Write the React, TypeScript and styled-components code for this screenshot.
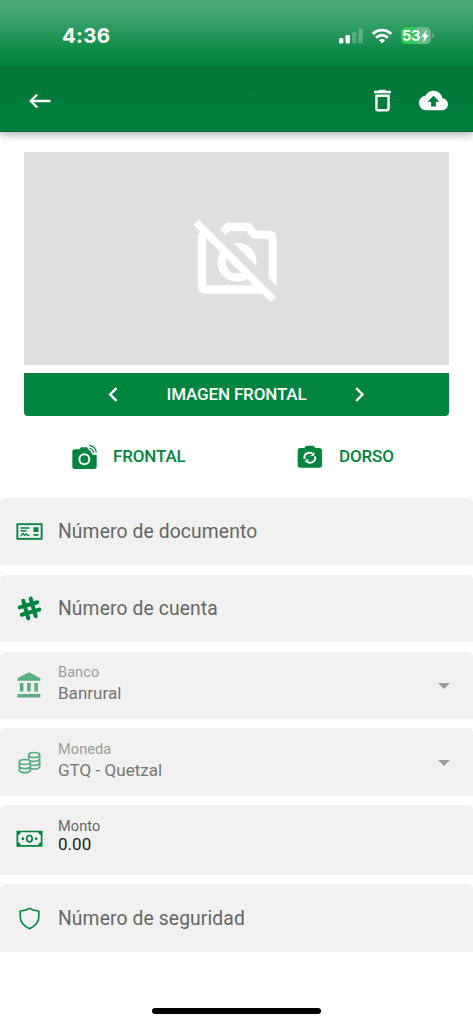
import React from 'react';
import styled, { createGlobalStyle } from 'styled-components';

const GREEN = '#00853f';

const GlobalStyle = createGlobalStyle`
  * { box-sizing: border-box; }
  body { margin: 0; background: #fff; font-family: Roboto, sans-serif; }
  svg { display: block; flex: none; }
`;

const Screen = styled.div`
  display: flex;
  flex-direction: column;
  width: 473px;
  height: 1024px;
  background: #fff;
  overflow: hidden;
`;

const Header = styled.header`
  flex: none;
  height: 132px;
  box-shadow: 0 2px 9px rgba(0, 0, 0, 0.36);
  border-bottom: 1px solid #04622f;
`;

const StatusBar = styled.div`
  display: flex;
  align-items: center;
  height: 66px;
  padding: 5px 39.5px 0 62px;
  background: linear-gradient(#4fab7a 0%, #45a672 18%, #0a8a46 78%, #00843f 100%);
  color: #fff;
`;

const Clock = styled.span`
  flex: 1;
  font: 700 20.5px/24px Inter, sans-serif;
  letter-spacing: 0.25px;
`;

const StatusIcons = styled.div`
  display: flex;
  align-items: center;
  gap: 9px;
`;

const Battery = styled.div`
  display: flex;
  align-items: center;
  justify-content: center;
  gap: 1px;
  width: 30px;
  height: 17px;
  border-radius: 5px;
  background: linear-gradient(90deg, #33c659 0 53%, #6db989 53%);
  font: 700 14.5px/17px Inter, sans-serif;
  letter-spacing: -0.3px;
`;

const BatteryWrap = styled.div`
  display: flex;
  align-items: center;
  gap: 1px;
`;

const BatteryCap = styled.i`
  width: 2px;
  height: 5px;
  border-radius: 0 2px 2px 0;
  background: #63b485;
`;

const AppBar = styled.div`
  display: flex;
  align-items: center;
  height: 65px;
  padding: 4px 25px 0 29px;
  background: linear-gradient(#007536, #00803c);
  color: #fff;
`;

const AppActions = styled.div`
  display: flex;
  gap: 22px;
  margin-left: auto;
`;

const Preview = styled.div`
  display: flex;
  flex: none;
  align-items: center;
  justify-content: center;
  height: 213px;
  margin: 20px 24px 0;
  padding: 4px 4px 0 0;
  background: #dfdfdf;
`;

const Switcher = styled.div`
  display: flex;
  flex: none;
  align-items: center;
  justify-content: space-between;
  height: 43px;
  margin: 8px 24px 0;
  padding: 0 84px;
  border-radius: 0 0 4px 4px;
  background: ${GREEN};
  color: #fff;
  font-size: 17px;
  font-weight: 500;
  letter-spacing: -0.15px;
`;

const SwitcherTitle = styled.span`
  padding-bottom: 1px;
`;

const Captures = styled.div`
  display: grid;
  flex: none;
  grid-template-columns: 226px 1fr;
  height: 82px;
  padding-left: 71px;
`;

const Capture = styled.div`
  display: flex;
  align-items: center;
  gap: 16px;
  color: ${GREEN};
  font-size: 17px;
  font-weight: 500;
  letter-spacing: -0.15px;
`;

const CaptureLabel = styled.span`
  padding-bottom: 2px;
`;

const Form = styled.div`
  display: flex;
  flex-direction: column;
  flex: none;
  gap: 9.5px;
`;

const Field = styled.div<{ $height?: number }>`
  display: flex;
  align-items: center;
  height: ${(p) => p.$height ?? 67.3}px;
  padding: 0 14.5px;
  border-radius: 5px 5px 0 0;
  background: #f1f1f1;
  color: ${GREEN};
`;

const FieldIcon = styled.div<{ $dim?: boolean; $lift?: number }>`
  padding-bottom: ${(p) => p.$lift ?? 0}px;
  opacity: ${(p) => (p.$dim ? 0.62 : 1)};
`;

const FieldBody = styled.div<{ $lift?: number }>`
  flex: 1;
  margin-left: 14.5px;
  padding-bottom: ${(p) => p.$lift ?? 0}px;
`;

const Placeholder = styled.div`
  padding-top: 1px;
  color: #666;
  font-size: 19.3px;
  line-height: 24px;
  letter-spacing: 0.12px;
`;

const Label = styled.div<{ $dim?: boolean }>`
  color: ${(p) => (p.$dim ? '#9b9b9b' : '#666')};
  font-size: 14.5px;
  line-height: 18px;
  letter-spacing: 0.1px;
`;

const Value = styled.div<{ $dim?: boolean }>`
  margin-top: ${(p) => (p.$dim ? 0 : -3)}px;
  color: ${(p) => (p.$dim ? '#757575' : '#1d1d1d')};
  font-size: 17px;
  line-height: 22px;
  letter-spacing: 0.03px;
`;

const Caret = styled.i`
  width: 0;
  margin: 1px 8.5px 0 0;
  border: 6px solid transparent;
  border-top-color: #9c9c9c;
  border-bottom: 0;
`;

const HomeIndicator = styled.div`
  flex: none;
  width: 169px;
  height: 6px;
  margin: auto auto 10px 152px;
  border-radius: 3px;
  background: #000;
`;

const Signal = () => (
  <svg width="24" height="16" viewBox="0 0 24 16" fill="#fff">
    <rect x="0" y="10" width="4.400" height="5.500" rx="1.300" />
    <rect x="6.500" y="7" width="4.400" height="8.500" rx="1.300" />
    <rect x="13" y="4" width="4.400" height="11.500" rx="1.300" opacity=".25" />
    <rect x="19.300" y="0.500" width="4.400" height="15" rx="1.300" opacity=".25" />
  </svg>
);

const Wifi = () => (
  <svg width="20" height="16" viewBox="0 0 20 16" fill="none" stroke="#fff" strokeWidth="2.800">
    <path d="M.9 5.900a12.900 12.900 0 0 1 18.200 0" />
    <path d="M4.100 9.700a8.300 8.300 0 0 1 11.800 0" />
    <path d="M10 15.500l-3.100-3.300a4.400 4.400 0 0 1 6.200 0z" fill="#fff" stroke="none" />
  </svg>
);

const Bolt = () => (
  <svg width="8" height="12" viewBox="0 0 7 12" fill="#fff">
    <path d="M5 .3L.3 6.800h2.800L2 11.700l4.800-6.600H3.900z" stroke="#fff" strokeWidth=".5" />
  </svg>
);

const BackArrow = () => (
  <svg width="23" height="16" viewBox="0 0 23 16" fill="none" stroke="currentColor" strokeWidth="2.300" strokeLinecap="round" strokeLinejoin="round">
    <path d="M20.700 8H2M7.600 2.200L1.600 8l6 5.800" />
  </svg>
);

const Trash = () => (
  <svg width="29" height="29" viewBox="0 0 24 24" fill="currentColor">
    <path d="M6 19c0 1.100.9 2 2 2h8c1.100 0 2-.9 2-2V7H6v12zM8 9h8v10H8V9zm7.500-5l-1-1h-5l-1 1H5v2h14V4z" />
  </svg>
);

const CloudUpload = () => (
  <svg width="29" height="29" viewBox="0 0 24 24" fill="currentColor">
    <path d="M19.350 10.040C18.670 6.590 15.640 4 12 4 9.110 4 6.600 5.640 5.350 8.040 2.340 8.360 0 10.910 0 14c0 3.310 2.690 6 6 6h13c2.760 0 5-2.240 5-5 0-2.640-2.050-4.780-4.650-4.960zM14 13v4h-4v-4H7l5-5 5 5h-3z" />
  </svg>
);

const NoCamera = () => (
  <svg width="84" height="84" viewBox="37 42 252 252">
    <defs>
      <clipPath id="upper"><path d="M44 0H400V356z" /></clipPath>
      <clipPath id="lower"><path d="M0 5L345 350H0z" /></clipPath>
    </defs>
    <g fill="none" stroke="#fff" strokeWidth="25">
      <circle cx="169" cy="172" r="46" clipPath="url(#upper)" />
      <circle cx="169" cy="172" r="46" clipPath="url(#lower)" />
    </g>
    <g fill="#fff">
      <path d="M118 73L137 53H208L227 77H266Q288 77 288 99V244L264 220V101H216L197 78H148L135 90z" />
      <path d="M51 97Q51 82 64 76L76 98V241H219L244 266H73Q51 266 51 244z" />
      <path d="M38 60L55 44L286 276L270 292z" />
    </g>
  </svg>
);

const Chevron = ({ right }: { right?: boolean }) => (
  <svg width="10" height="15" viewBox="0 0 10 15" fill="none" stroke="currentColor" strokeWidth="2.400">
    <path d={right ? 'M1.200 1.200L7.500 7.500L1.200 13.800' : 'M8.500 1.200L2.200 7.500L8.500 13.800'} />
  </svg>
);

const CameraWireless = () => (
  <svg width="26" height="26" viewBox="-2 -2 78 78">
    <path fill="currentColor" d="M10 14H23L28 8H47Q49 16 55 18Q60 21 62 28H75V66Q75 73 68 73H9Q2 73 2 66V22Q2 14 10 14z" />
    <circle cx="38" cy="44" r="15" fill="none" stroke="#fff" strokeWidth="6" />
    <path d="M48 10Q60 14 63 29H76" fill="none" stroke="#fff" strokeWidth="3" />
    <g fill="none" stroke="currentColor" strokeWidth="3.800">
      <path d="M53 2Q71 4 74 23M52 10Q64 13 66 24" />
    </g>
  </svg>
);

const CameraRetake = () => (
  <svg width="26" height="26" viewBox="0 0 78 78">
    <path fill="currentColor" d="M10 12H22L28 5H49L55 12H67Q75 12 75 20V63Q75 71 67 71H10Q2 71 2 63V20Q2 12 10 12z" />
    <g fill="none" stroke="#fff" strokeWidth="6">
      <path d="M23 45Q20 31 32 27Q41 24 48 30" />
      <path d="M54 37Q57 51 45 55Q36 58 29 52" />
    </g>
    <path fill="#fff" d="M54 25L51 35L40 37zM23 57L26 47L37 45z" />
  </svg>
);

const CheckIcon = () => (
  <svg width="29" height="29" viewBox="43.500 79 87 87">
    <rect x="50.500" y="100.500" width="73" height="44" fill="none" stroke="currentColor" strokeWidth="5.500" />
    <path fill="currentColor" d="M99 110h15v14H99zM99 130h15v5H99z" />
    <g fill="none" stroke="currentColor" strokeWidth="4.500">
      <path d="M60 112H87M60 120.500H78" />
      <path d="M61 136L68 128L72 134L77 130L81 134H87" strokeWidth="4" />
    </g>
  </svg>
);

const HashIcon = () => (
  <svg width="29" height="29" viewBox="0 0 87 87" fill="none" stroke="currentColor" strokeWidth="12" strokeLinecap="round">
    <g transform="rotate(-16 43.500 43.500)">
      <path d="M32 16V71M55 16V71M16 32H71M16 55H71" />
    </g>
  </svg>
);

const BankIcon = () => (
  <svg width="29" height="29" viewBox="0 0 24 24" fill="currentColor">
    <path d="M11.500 1L2 6v2h19V6M16 10v7h3v-7M2 22h19v-3H2M10 10v7h3v-7M4 10v7h3v-7z" />
  </svg>
);

const CoinsIcon = () => (
  <svg width="29" height="29" viewBox="43.500 307 87 87" fill="none" stroke="currentColor" strokeWidth="5">
    <ellipse cx="101" cy="328" rx="16.500" ry="7.500" />
    <path d="M84.500 328V342M117.500 328V362Q116 370 101 370Q96 370 91 369M117.500 339Q115 347 101 347Q95 347 89 345M117.500 351Q115 359 101 359Q96 359 91 358" />
    <ellipse cx="73" cy="349" rx="16.500" ry="7.500" />
    <path d="M56.500 349V373Q58 381 73 381Q88 381 89.500 373V349M56.500 361Q58 369 73 369Q88 369 89.500 361" />
  </svg>
);

const CashIcon = () => (
  <svg width="29" height="29" viewBox="43.500 86 87 87">
    <path fill="currentColor" fillRule="evenodd" d="M48 106H126V154H48zM61 111Q60 117 53 119V141Q60 143 61 149H113Q114 143 121 141V119Q114 117 113 111z" />
    <ellipse cx="87" cy="130" rx="8" ry="9.500" fill="none" stroke="currentColor" strokeWidth="5" />
    <circle cx="67" cy="130" r="4" fill="currentColor" />
    <circle cx="107" cy="130" r="4" fill="currentColor" />
  </svg>
);

const ShieldIcon = () => (
  <svg width="29" height="29" viewBox="43.500 325.500 87 87" fill="none" stroke="currentColor" strokeWidth="4.800" strokeLinejoin="round">
    <path d="M87 338.500Q98 346 115 346.500V364Q114 388 87 399.500Q60 388 59 364V346.500Q76 346 87 338.500z" />
  </svg>
);

export default function App() {
  return (
    <Screen>
      <GlobalStyle />
      <Header>
        <StatusBar>
          <Clock>4:36</Clock>
          <StatusIcons>
            <Signal />
            <Wifi />
            <BatteryWrap>
              <Battery>53<Bolt /></Battery>
              <BatteryCap />
            </BatteryWrap>
          </StatusIcons>
        </StatusBar>
        <AppBar>
          <BackArrow />
          <AppActions>
            <Trash />
            <CloudUpload />
          </AppActions>
        </AppBar>
      </Header>
      <Preview><NoCamera /></Preview>
      <Switcher>
        <Chevron />
        <SwitcherTitle>IMAGEN FRONTAL</SwitcherTitle>
        <Chevron right />
      </Switcher>
      <Captures>
        <Capture><CameraWireless /><CaptureLabel>FRONTAL</CaptureLabel></Capture>
        <Capture><CameraRetake /><CaptureLabel>DORSO</CaptureLabel></Capture>
      </Captures>
      <Form>
        <Field>
          <FieldIcon><CheckIcon /></FieldIcon>
          <FieldBody><Placeholder>Número de documento</Placeholder></FieldBody>
        </Field>
        <Field>
          <FieldIcon><HashIcon /></FieldIcon>
          <FieldBody><Placeholder>Número de cuenta</Placeholder></FieldBody>
        </Field>
        <Field>
          <FieldIcon $dim><BankIcon /></FieldIcon>
          <FieldBody $lift={2}>
            <Label $dim>Banco</Label>
            <Value $dim>Banrural</Value>
          </FieldBody>
          <Caret />
        </Field>
        <Field>
          <FieldIcon $dim><CoinsIcon /></FieldIcon>
          <FieldBody $lift={2}>
            <Label $dim>Moneda</Label>
            <Value $dim>GTQ - Quetzal</Value>
          </FieldBody>
          <Caret />
        </Field>
        <Field $height={69.8}>
          <FieldIcon $lift={4}><CashIcon /></FieldIcon>
          <FieldBody $lift={7}>
            <Label>Monto</Label>
            <Value>0.00</Value>
          </FieldBody>
        </Field>
        <Field>
          <FieldIcon><ShieldIcon /></FieldIcon>
          <FieldBody><Placeholder>Número de seguridad</Placeholder></FieldBody>
        </Field>
      </Form>
      <HomeIndicator />
    </Screen>
  );
}
